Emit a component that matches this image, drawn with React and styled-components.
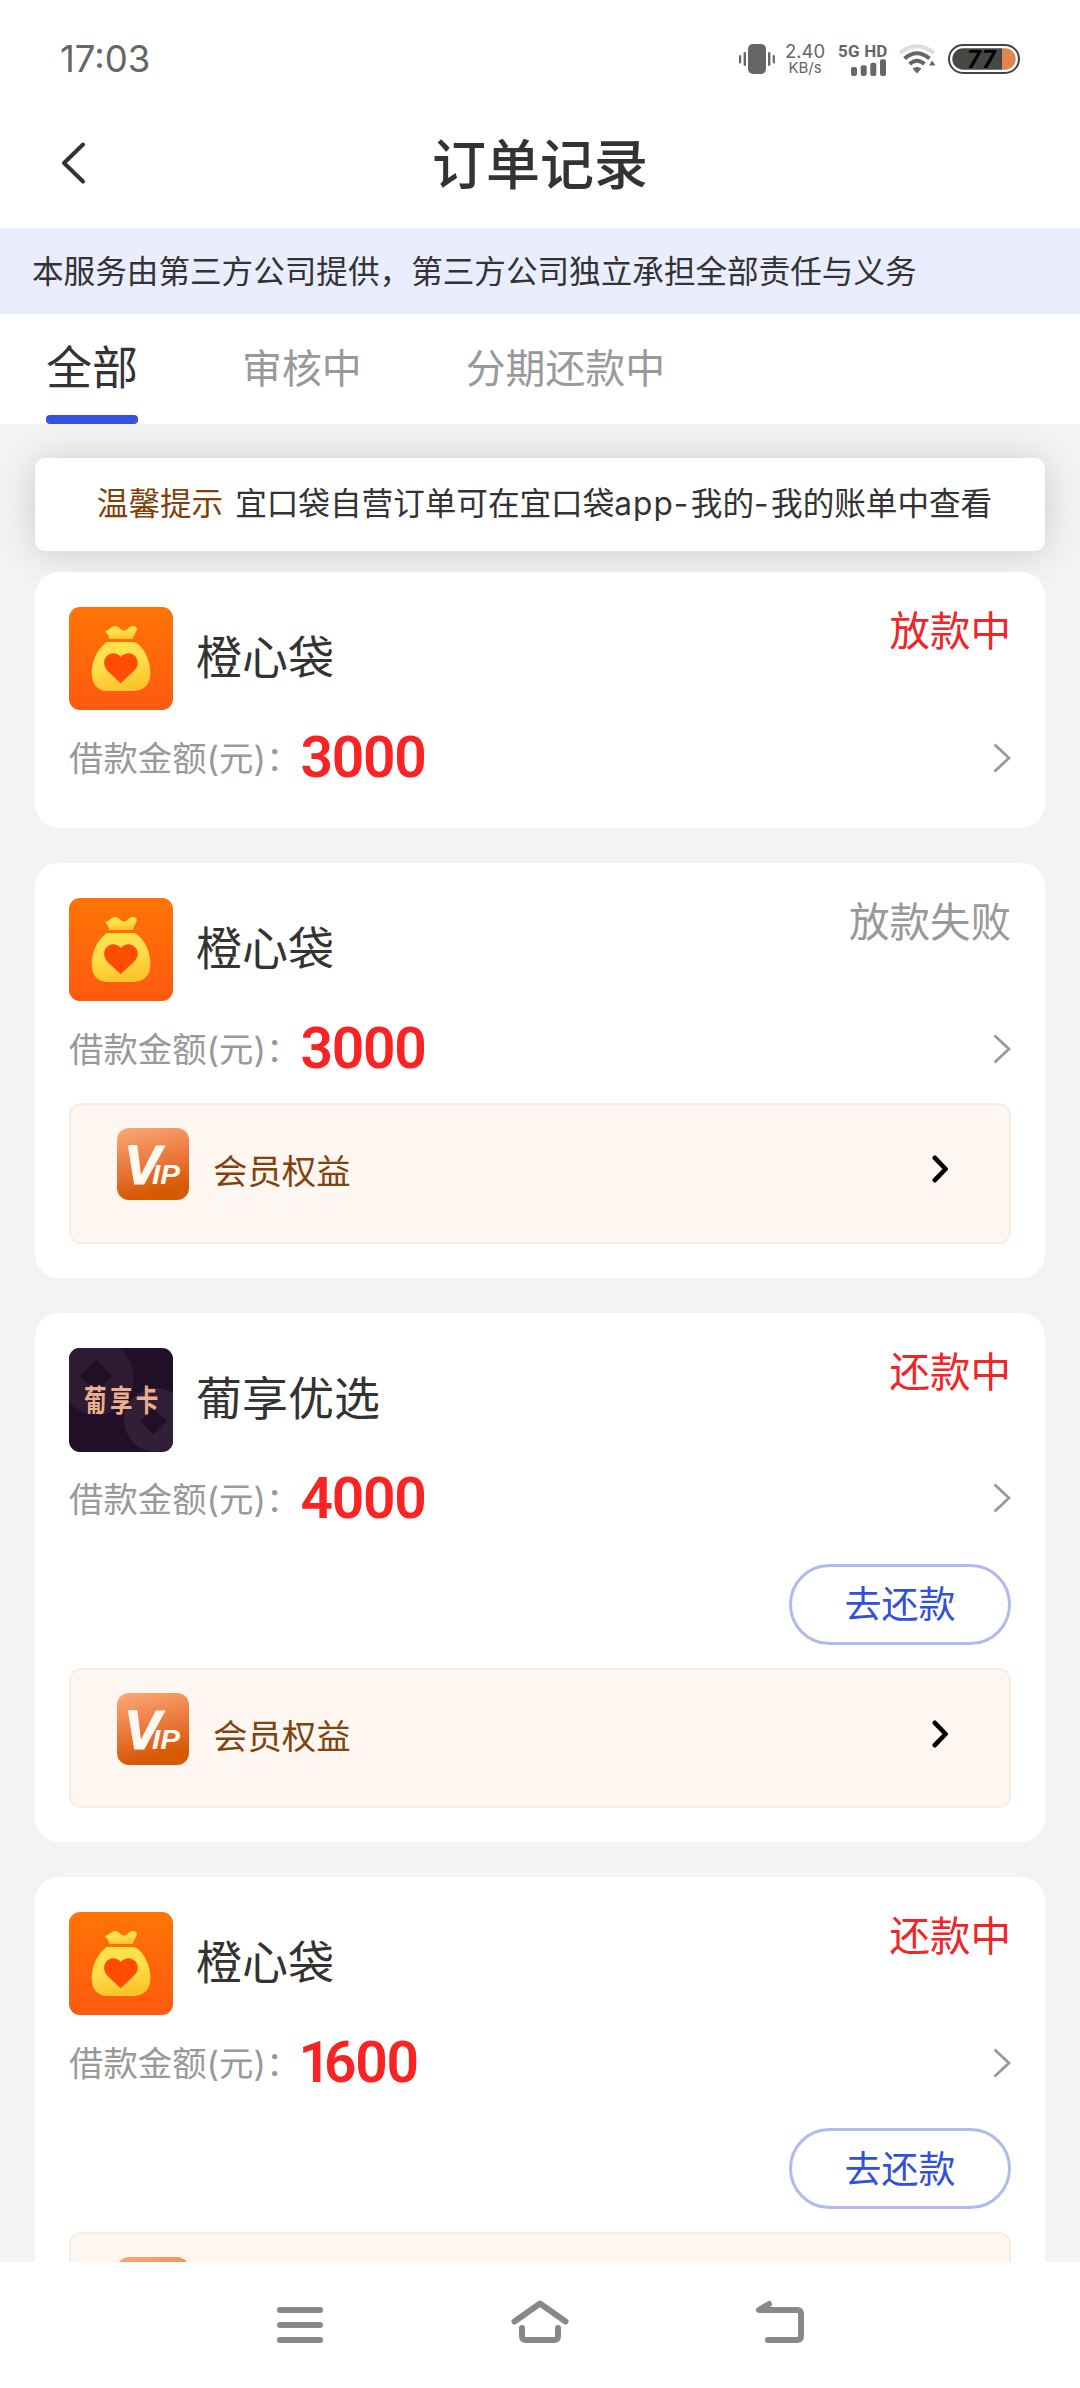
import React from "react";
import styled, { createGlobalStyle } from "styled-components";

const GlobalStyle = createGlobalStyle`
  * {
    box-sizing: border-box;
  }
  body {
    margin: 0;
    background: #fff;
    font-family: "Inter", "Noto Sans CJK SC", sans-serif;
    color: #333;
  }
`;

const Screen = styled.div`
  width: 1080px;
  height: 2388px;
  display: flex;
  flex-direction: column;
  overflow: hidden;
  background: #fff;
`;

const StatusBar = styled.div`
  height: 98px;
  flex: none;
  display: flex;
  align-items: center;
  justify-content: space-between;
  padding: 20px 60px 0;
  color: #666;
`;

const Time = styled.div`
  font-size: 36.5px;
  line-height: 40px;
`;

const StatusIcons = styled.div`
  display: flex;
  align-items: center;
`;

const NetSpeed = styled.div`
  width: 40px;
  margin-left: 10px;
  text-align: center;
  font-size: 18.5px;
  line-height: 17px;
`;

const NetUnit = styled.div`
  font-size: 15px;
  line-height: 16px;
`;

const Signal = styled.div`
  width: 49px;
  margin-left: 13px;
  font: 700 17px/16px Roboto, sans-serif;
  letter-spacing: 0.2px;
  white-space: nowrap;
`;

const SignalBars = styled.svg`
  display: block;
  margin-left: 13px;
`;

const WifiIcon = styled.svg`
  margin-left: 12px;
`;

const BatteryIcon = styled.svg`
  margin-left: 12px;
`;

const NavBar = styled.header`
  height: 130px;
  flex: none;
  display: grid;
  grid-template-columns: 120px 1fr 120px;
  align-items: center;
`;

const BackButton = styled.button`
  display: flex;
  padding: 0 0 0 58px;
  border: 0;
  background: none;
`;

const PageTitle = styled.h1`
  margin: 0;
  padding-top: 5px;
  text-align: center;
  font-size: 54px;
  line-height: 60px;
  font-weight: 500;
`;

const Notice = styled.div`
  height: 86px;
  flex: none;
  padding-left: 32px;
  background: #eaedfd;
  font-size: 31.6px;
  line-height: 87px;
`;

const Tabs = styled.nav`
  height: 110px;
  flex: none;
  display: flex;
  gap: 104px;
  padding-left: 46px;
`;

const Tab = styled.div`
  display: flex;
  flex-direction: column;
  justify-content: space-between;
  color: ${(p) => (p.$active ? "#333" : "#999")};
  font-size: ${(p) => (p.$active ? 46 : 39.9)}px;
  line-height: ${(p) => (p.$active ? 106 : 110)}px;
  &::after {
    content: "";
    height: 9px;
    flex: none;
    margin-top: -14px;
    border-radius: 4px;
    background: ${(p) => (p.$active ? "#3452e1" : "transparent")};
  }
`;

const Content = styled.main`
  flex: 1;
  min-height: 0;
  overflow: hidden;
  padding: 34px 35px 0;
  background: #f3f3f3;
`;

const Tip = styled.div`
  height: 93px;
  padding-left: 9px;
  border-radius: 10px;
  background: #fff;
  box-shadow: 0 2px 36px rgba(0, 0, 0, 0.16);
  text-align: center;
  font-size: 31.6px;
  line-height: 91px;
  white-space: nowrap;
`;

const TipLabel = styled.span`
  margin-right: 12px;
  color: #80400a;
`;

const TipPath = styled.span`
  letter-spacing: ${(p) => p.$gap}px;
`;

const OrderList = styled.div`
  position: relative;
  display: flex;
  flex-direction: column;
  gap: 35px;
  margin-top: 21px;
`;

const Card = styled.section`
  padding: 35px 34px 34px;
  border-radius: 24px;
  background: #fff;
`;

const CardHead = styled.div`
  display: flex;
  height: 103px;
`;

const Product = styled.div`
  margin-left: 23px;
  font-size: 46px;
  line-height: 101px;
`;

const Status = styled.div`
  margin-left: auto;
  color: ${(p) => (p.$failed ? "#999" : "#f02528")};
  font-size: 40.5px;
  line-height: 49px;
`;

const AmountRow = styled.div`
  display: flex;
  align-items: center;
  height: 73px;
  margin-top: 11px;
`;

const AmountLabel = styled.span`
  padding-bottom: 3px;
  color: #999;
  font-size: 34.4px;
`;

const Amount = styled.span`
  color: #fa2323;
  font: 600 57px/73px Roboto, sans-serif;
  letter-spacing: -1.3px;
`;

const NarrowDigit = styled.span`
  margin-left: -2px;
  letter-spacing: -7px;
`;

const RowArrow = styled.svg`
  margin-left: auto;
`;

const Actions = styled.div`
  display: flex;
  justify-content: flex-end;
  margin-top: 29px;
`;

const RepayButton = styled.button`
  width: 222px;
  height: 81px;
  padding: 0 0 4px;
  border: 3px solid #b0baee;
  border-radius: 41px;
  background: #fff;
  color: #3350d8;
  font-family: inherit;
  font-size: 37px;
`;

const VipBox = styled.div`
  display: flex;
  align-items: flex-start;
  height: 140.5px;
  margin-top: ${(p) => (p.$afterAction ? 23 : 18)}px;
  padding: 23px 60px 0 46px;
  border: 2px solid #faece1;
  border-radius: 12px;
  background: #fef7f1;
`;

const VipText = styled.span`
  margin-left: 24px;
  color: #80430f;
  font-size: 34.4px;
  line-height: 87px;
`;

const VipArrow = styled.svg`
  margin: 27px 0 0 auto;
`;

const SystemNav = styled.footer`
  height: 126px;
  flex: none;
  display: grid;
  grid-template-columns: 240px 240px 240px;
  justify-content: center;
  align-items: center;
  justify-items: center;
  background: #fff;
`;

function BagLogo() {
  return (
    <svg width="104" height="103" viewBox="27 21 312 309">
      <defs>
        <linearGradient id="bagBg" x1="0" y1="0" x2="0" y2="1">
          <stop offset="0" stopColor="#ff7504" />
          <stop offset="1" stopColor="#ff5911" />
        </linearGradient>
        <linearGradient id="bagFill" x1="0" y1="0" x2="0.25" y2="1">
          <stop offset="0" stopColor="#ffe14a" />
          <stop offset="0.5" stopColor="#ffe04a" />
          <stop offset="1" stopColor="#fdc52c" />
        </linearGradient>
      </defs>
      <rect x="27" y="21" width="312" height="309" rx="33" fill="url(#bagBg)" />
      <path
        d="M135 93 Q146 90 155 82 Q166 74 176 82 Q184 92 194 92 Q203 89 208 82 Q218 74 229 82 Q233 89 226 99 L218 117 H148 Q145 103 135 93Z"
        fill="url(#bagFill)"
      />
      <path
        d="M140 126 H222 Q239 131 254 156 Q270 184 271 216 Q273 268 223 273 H142 Q96 271 95 218 Q97 160 140 126Z"
        fill="url(#bagFill)"
      />
      <path
        d="M182 250 L142 212 Q128 196 134 178 Q142 161 159 160 Q174 160 182 171 Q192 160 207 160 Q225 162 232 179 Q237 197 222 212Z"
        fill="#ff4d04"
      />
    </svg>
  );
}

function GrapeLogo() {
  return (
    <svg width="104" height="104" viewBox="0 0 104 104">
      <defs>
        <clipPath id="grapeClip">
          <rect width="104" height="104" rx="11" />
        </clipPath>
      </defs>
      <g clipPath="url(#grapeClip)">
        <rect width="104" height="104" fill="#210f27" />
        <circle cx="28" cy="30" r="37" fill="#2e1a33" />
        <path d="M28 12 L43 28 L28 43 L10 28Z" fill="#210f27" />
        <circle cx="87" cy="72" r="32" fill="#321e37" />
        <path d="M84 60 L98 73 L84 87 L72 73Z" fill="#210f27" />
      </g>
      <text
        transform="translate(15 63) scale(1 1.32)"
        fontFamily="Noto Sans CJK SC"
        fontWeight="700"
        fontSize="22.5"
        letterSpacing="3.4"
        fill="#e8b08d"
      >
        葡享卡
      </text>
    </svg>
  );
}

function VipLogo() {
  return (
    <svg width="72" height="72" viewBox="0 0 72 72">
      <defs>
        <linearGradient id="vipBg" x1="0.3" y1="0" x2="0.55" y2="1">
          <stop offset="0" stopColor="#f8a471" />
          <stop offset="0.5" stopColor="#e9773a" />
          <stop offset="0.9" stopColor="#d65903" />
        </linearGradient>
      </defs>
      <rect width="72" height="72" rx="12" fill="url(#vipBg)" />
      <rect x="12" y="17" width="8" height="4" fill="#fff8f0" />
      <text
        x="7"
        y="55.5"
        fill="#fff8f0"
        stroke="#fff8f0"
        strokeWidth="1.2"
        fontFamily="Liberation Sans"
        fontStyle="italic"
        fontWeight="700"
        fontSize="55"
      >
        V
        <tspan
          x="35"
          fontSize="27"
          strokeWidth="0"
          textLength="28"
          lengthAdjust="spacingAndGlyphs"
        >
          IP
        </tspan>
      </text>
    </svg>
  );
}

// a leading "1" sits closer to the next digit than the tabular width allows
function AmountValue({ value }) {
  const text = String(value);
  if (text[0] !== "1") return <Amount>{text}</Amount>;
  return (
    <Amount>
      <NarrowDigit>1</NarrowDigit>
      {text.slice(1)}
    </Amount>
  );
}

function OrderCard({ logo, name, amount, status, failed, repay, vip }) {
  return (
    <Card>
      <CardHead>
        {logo === "grape" ? <GrapeLogo /> : <BagLogo />}
        <Product>{name}</Product>
        <Status $failed={failed}>{status}</Status>
      </CardHead>
      <AmountRow>
        <AmountLabel>借款金额(元)：</AmountLabel>
        <AmountValue value={amount} />
        <RowArrow width="18" height="30" fill="none" stroke="#999" strokeWidth="2.8">
          <path d="M1.5 1.5 L16 15 L1.5 28.5" />
        </RowArrow>
      </AmountRow>
      {repay && (
        <Actions>
          <RepayButton>去还款</RepayButton>
        </Actions>
      )}
      {vip && (
        <VipBox $afterAction={repay}>
          <VipLogo />
          <VipText>会员权益</VipText>
          <VipArrow
            width="17"
            height="28"
            fill="none"
            stroke="#000"
            strokeWidth="4.6"
            strokeLinecap="round"
            strokeLinejoin="round"
          >
            <path d="M2.8 2.8 L13.6 14 L2.8 25.2" />
          </VipArrow>
        </VipBox>
      )}
    </Card>
  );
}

const orders = [
  { id: 1, name: "橙心袋", amount: 3000, status: "放款中" },
  { id: 2, name: "橙心袋", amount: 3000, status: "放款失败", failed: true, vip: true },
  { id: 3, logo: "grape", name: "葡享优选", amount: 4000, status: "还款中", repay: true, vip: true },
  { id: 4, name: "橙心袋", amount: 1600, status: "还款中", repay: true, vip: true },
];

function App() {
  return (
    <Screen>
      <GlobalStyle />
      <StatusBar>
        <Time>17:03</Time>
        <StatusIcons>
          <svg width="36" height="30" fill="#666">
            <rect x="9" y="0" width="18" height="30" rx="5" />
            <rect x="4.6" y="8" width="2.4" height="14" rx="1.2" />
            <rect x="0" y="11" width="2.2" height="8.5" rx="1.1" />
            <rect x="29" y="8" width="2.4" height="14" rx="1.2" />
            <rect x="33.7" y="11" width="2.2" height="8.5" rx="1.1" />
          </svg>
          <NetSpeed>
            2.40
            <NetUnit>KB/s</NetUnit>
          </NetSpeed>
          <Signal>
            5G HD
            <SignalBars width="36" height="17" fill="#666">
              <rect x="0" y="8" width="6" height="9" rx="2" />
              <rect x="9.7" y="6.3" width="6" height="10.7" rx="2" />
              <rect x="19.3" y="3.7" width="6" height="13.3" rx="2" />
              <rect x="29" y="0.3" width="6" height="16.7" rx="2" />
            </SignalBars>
          </Signal>
          <WifiIcon width="37" height="30" fill="none" strokeWidth="4">
            <path d="M1 9 Q18 -4.5 35 9" stroke="#ddd" />
            <path d="M5.5 14.5 Q18 4 30.5 14.5" stroke="#666" />
            <path d="M10.5 20 Q18 13.5 25.5 20" stroke="#666" />
            <path d="M13.5 24.5 Q18 21.5 22.5 24.5 L18 29.5Z" fill="#666" />
            <path d="M30 21.5 L33.2 16.5 L36.5 21.5Z" fill="#666" />
          </WifiIcon>
          <BatteryIcon width="72" height="30">
            <defs>
              <clipPath id="batteryClip">
                <rect x="4.3" y="4.3" width="63.4" height="21.4" rx="10.7" />
              </clipPath>
            </defs>
            <rect x="1" y="1" width="70" height="28" rx="14" fill="#fff" stroke="#444" strokeWidth="2" />
            <g clipPath="url(#batteryClip)">
              <rect width="54" height="30" fill="#454845" />
              <rect x="54" width="18" height="30" fill="#e08450" />
            </g>
            <text
              x="19"
              y="24"
              fontFamily="Roboto"
              fontSize="25"
              fontWeight="700"
              fontStyle="italic"
              textLength="29"
              fill="#000"
            >
              77
            </text>
          </BatteryIcon>
        </StatusIcons>
      </StatusBar>
      <NavBar>
        <BackButton>
          <svg
            width="30"
            height="44"
            fill="none"
            stroke="#333"
            strokeWidth="4"
            strokeLinecap="round"
            strokeLinejoin="round"
          >
            <path d="M25 3.5 L6 22 L25 40.5" />
          </svg>
        </BackButton>
        <PageTitle>订单记录</PageTitle>
      </NavBar>
      <Notice>本服务由第三方公司提供，第三方公司独立承担全部责任与义务</Notice>
      <Tabs>
        <Tab $active>全部</Tab>
        <Tab>审核中</Tab>
        <Tab>分期还款中</Tab>
      </Tabs>
      <Content>
        <Tip>
          <TipLabel>温馨提示</TipLabel>
          宜口袋自营订单可在宜口袋<TipPath $gap={1}>app</TipPath>
          <TipPath $gap={2.5}>-</TipPath>我的<TipPath $gap={2.5}>-</TipPath>
          我的账单中查看
        </Tip>
        <OrderList>
          {orders.map((order) => (
            <OrderCard key={order.id} {...order} />
          ))}
        </OrderList>
      </Content>
      <SystemNav>
        <svg width="46" height="36" fill="#888">
          <rect y="0" width="46" height="6" rx="3" />
          <rect y="15" width="46" height="6" rx="3" />
          <rect y="30" width="46" height="6" rx="3" />
        </svg>
        <svg
          width="58"
          height="50"
          fill="none"
          stroke="#888"
          strokeWidth="6"
          strokeLinecap="round"
          strokeLinejoin="round"
        >
          <path d="M3.5 21.5 L29 3.5 L54.5 21.5" />
          <path d="M11 28 V36 Q11 40 15 40 H43 Q47 40 47 36 V28" />
        </svg>
        <svg
          width="48"
          height="50"
          fill="none"
          stroke="#888"
          strokeWidth="6"
          strokeLinecap="round"
          strokeLinejoin="round"
        >
          <path d="M13 4 L3 10 H41 Q45 10 45 14 V36 Q45 40 41 40 H12" />
        </svg>
      </SystemNav>
    </Screen>
  );
}

export default App;
